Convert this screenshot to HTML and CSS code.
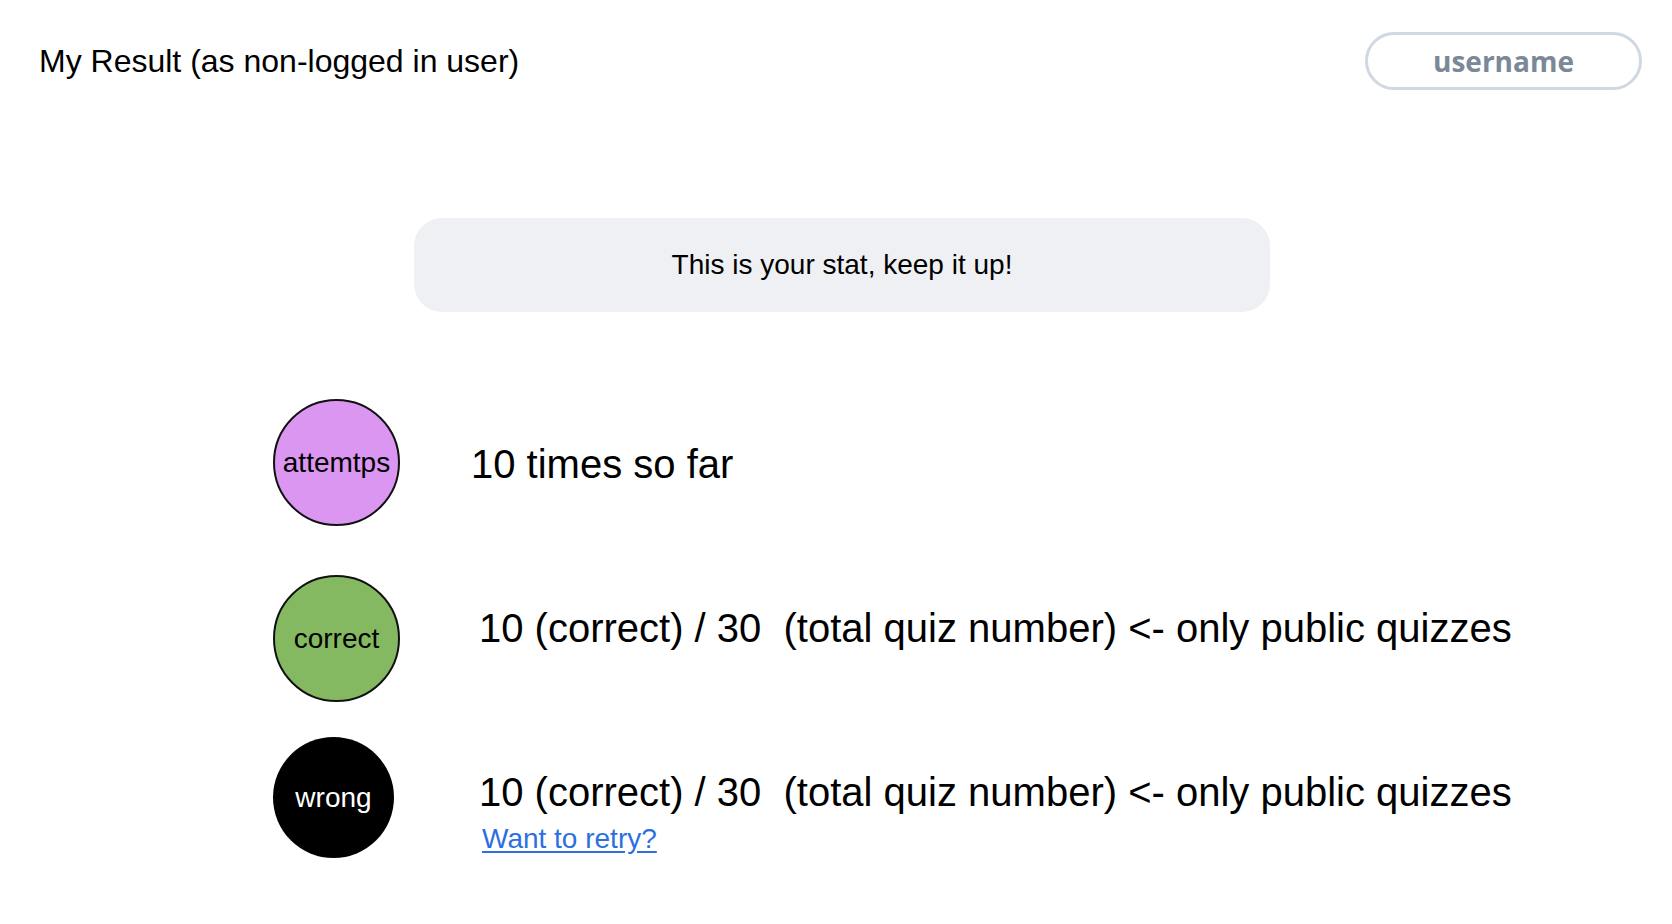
FILE: index.html
```html
<!DOCTYPE html>
<html lang="en">
<head>
<meta charset="utf-8">
<title>My Result</title>
<link rel="stylesheet" href="styles.css">
</head>
<body>
<div class="page">
  <header class="header">
    <h1 class="title">My Result (as non-logged in user)</h1>
    <button class="user-btn" type="button">username</button>
  </header>

  <div class="banner">This is your stat, keep it up!</div>

  <section class="stats">
    <div class="row row-attempts">
      <div class="badge badge-attempts">attemtps</div>
      <div class="info info-attempts">
        <p class="value">10 times so far</p>
      </div>
    </div>
    <div class="row row-correct">
      <div class="badge badge-correct">correct</div>
      <div class="info info-correct">
        <p class="value">10 (correct) / 30&nbsp;&nbsp;(total quiz number) &lt;- only public quizzes</p>
      </div>
    </div>
    <div class="row row-wrong">
      <div class="badge badge-wrong">wrong</div>
      <div class="info info-wrong">
        <p class="value">10 (correct) / 30&nbsp;&nbsp;(total quiz number) &lt;- only public quizzes</p>
        <a class="retry" href="#">Want to retry?</a>
      </div>
    </div>
  </section>
</div>
</body>
</html>
```

FILE: styles.css
```css
* {
  box-sizing: border-box;
}

html, body {
  margin: 0;
  padding: 0;
  background: #ffffff;
}

body {
  font-family: "Liberation Sans", Arial, Helvetica, sans-serif;
  color: #000000;
}

.page {
  width: 1672px;
  min-height: 924px;
}

.header {
  display: flex;
  align-items: center;
  justify-content: space-between;
  padding: 32px 30px 0 39px;
  height: 90px;
}

.title {
  margin: 0;
  font-size: 32px;
  font-weight: 400;
  line-height: 40px;
}

.user-btn {
  width: 277px;
  height: 58px;
  border: 3px solid #d0d8e1;
  border-radius: 29px;
  background: #ffffff;
  font-family: "Open Sans", "Noto Sans", sans-serif;
  font-weight: 700;
  font-size: 28px;
  color: #7b8898;
  padding: 0;
  line-height: 1;
}

.banner {
  margin: 128px 0 0 414px;
  width: 856px;
  height: 94px;
  border-radius: 28px;
  background: #eff0f3;
  display: flex;
  align-items: center;
  justify-content: center;
  font-size: 28px;
}

.stats {
  padding: 87px 0 0 273px;
  display: flex;
  flex-direction: column;
}

.row {
  display: flex;
  align-items: flex-start;
}

.row-correct {
  margin-top: 49px;
}

.row-wrong {
  margin-top: 35px;
}

.badge {
  width: 127px;
  height: 127px;
  border-radius: 50%;
  border: 2px solid #111111;
  display: flex;
  align-items: center;
  justify-content: center;
  font-size: 28px;
  flex: none;
}

.badge-attempts {
  background: #da96f1;
}

.badge-correct {
  background: #84b962;
}

.badge-wrong {
  width: 121px;
  height: 121px;
  border: none;
  background: #000000;
  color: #ffffff;
}

.info {
  display: flex;
  flex-direction: column;
  align-items: flex-start;
}

.info-attempts {
  margin: 42px 0 0 71px;
}

.info-correct {
  margin: 30px 0 0 79px;
}

.info-wrong {
  margin: 32px 0 0 85px;
}

.value {
  margin: 0;
  font-size: 40px;
  line-height: 46px;
  white-space: nowrap;
}

.retry {
  margin: 9px 0 0 3px;
  font-size: 28px;
  line-height: 30px;
  color: #2d6fdf;
  text-decoration: underline;
  text-underline-offset: 3px;
}
```
